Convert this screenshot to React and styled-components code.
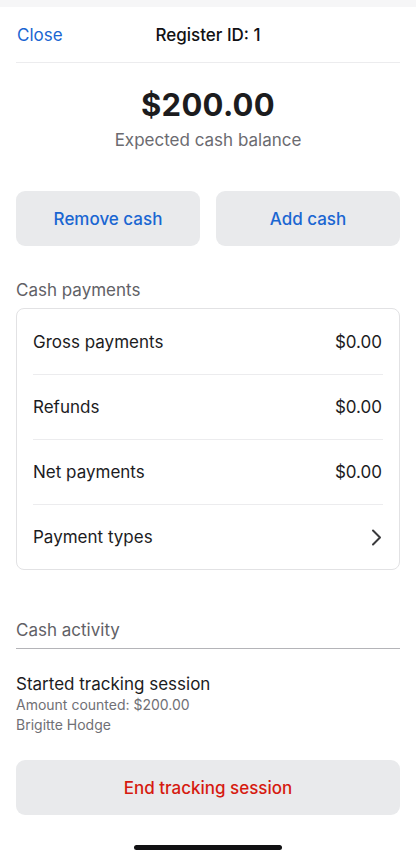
import React from "react";
import styled, { createGlobalStyle } from "styled-components";

const GlobalStyle = createGlobalStyle`
  html, body {
    margin: 0;
    padding: 0;
    background: #ffffff;
  }
  body {
    font-family: Inter, "Noto Sans", "Liberation Sans", sans-serif;
    -webkit-font-smoothing: antialiased;
  }
`;

const rows = [
  { label: "Gross payments", value: "$0.00" },
  { label: "Refunds", value: "$0.00" },
  { label: "Net payments", value: "$0.00" },
  { label: "Payment types", chevron: true },
];

const App = () => {
  return (
    <Screen>
      <GlobalStyle />
      <TopStrip />
      <Page>
        <Header>
          <CloseLink>Close</CloseLink>
          <HeaderTitle>Register ID: 1</HeaderTitle>
        </Header>

        <Balance>
          <Amount>$200.00</Amount>
          <AmountCaption>Expected cash balance</AmountCaption>
        </Balance>

        <ButtonRow>
          <ActionButton>Remove cash</ActionButton>
          <ActionButton>Add cash</ActionButton>
        </ButtonRow>

        <SectionLabel>Cash payments</SectionLabel>
        <Card>
          {rows.map((row, i) => (
            <Row key={row.label} last={i === rows.length - 1}>
              <RowLabel>{row.label}</RowLabel>
              {row.chevron ? (
                <svg width="11" height="17" viewBox="0 0 11 17">
                  <path
                    d="M2 1.5 L9 8.5 L2 15.5"
                    fill="none"
                    stroke="#3a3a3c"
                    strokeWidth="2"
                    strokeLinecap="round"
                    strokeLinejoin="round"
                  />
                </svg>
              ) : (
                <RowValue>{row.value}</RowValue>
              )}
            </Row>
          ))}
        </Card>

        <ActivityHeader>Cash activity</ActivityHeader>
        <Activity>
          <ActivityTitle>Started tracking session</ActivityTitle>
          <ActivityMeta>Amount counted: $200.00</ActivityMeta>
          <ActivityMeta>Brigitte Hodge</ActivityMeta>
        </Activity>

        <EndButton danger>End tracking session</EndButton>
      </Page>
      <HomeBar />
    </Screen>
  );
};

export default App;

const Screen = styled.div`
  width: 416px;
  height: 858px;
  display: flex;
  flex-direction: column;
  background: #ffffff;
  overflow: hidden;
`;

const TopStrip = styled.div`
  height: 7px;
  background: #f6f6f7;
`;

const Page = styled.div`
  flex: 1;
  display: flex;
  flex-direction: column;
  padding: 0 16px;
`;

const Header = styled.div`
  position: relative;
  height: 55px;
  display: flex;
  align-items: center;
  justify-content: center;
  border-bottom: 1px solid #ececee;
`;

const CloseLink = styled.div`
  position: absolute;
  left: 1px;
  top: 50%;
  transform: translateY(-50%);
  font-size: 17px;
  color: #1a66d2;
`;

const HeaderTitle = styled.div`
  font-size: 17px;
  font-weight: 500;
  color: #111113;
`;

const Balance = styled.div`
  display: flex;
  flex-direction: column;
  align-items: center;
  padding-top: 23px;
`;

const Amount = styled.div`
  font-size: 31px;
  font-weight: 700;
  color: #1c1c1e;
  line-height: 38px;
  letter-spacing: 0.3px;
`;

const AmountCaption = styled.div`
  margin-top: 5px;
  font-size: 17px;
  color: #6b6b70;
  line-height: 22px;
`;

const ButtonRow = styled.div`
  display: grid;
  grid-template-columns: 1fr 1fr;
  gap: 16px;
  margin-top: 40px;
`;

const ActionButton = styled.div`
  height: 55px;
  border-radius: 9px;
  background: #e9eaec;
  display: flex;
  align-items: center;
  justify-content: center;
  font-size: 17px;
  font-weight: 500;
  color: ${(props) => (props.danger ? "#d61a10" : "#1a66d2")};
`;

const EndButton = styled(ActionButton)`
  margin-top: 25px;
`;

const SectionLabel = styled.div`
  margin-top: 33px;
  font-size: 17px;
  color: #616166;
  line-height: 22px;
`;

const Card = styled.div`
  margin-top: 7px;
  border: 1px solid #e2e2e4;
  border-radius: 8px;
  padding: 1px 16px 0;
`;

const Row = styled.div`
  height: 64px;
  display: flex;
  align-items: center;
  justify-content: space-between;
  border-bottom: ${(props) => (props.last ? "none" : "1px solid #ececee")};
  padding-right: 1px;
`;

const RowLabel = styled.div`
  font-size: 17px;
  color: #1c1c1e;
`;

const RowValue = styled.div`
  font-size: 17px;
  color: #1c1c1e;
`;

const ActivityHeader = styled.div`
  margin-top: 49px;
  padding-bottom: 7px;
  font-size: 17px;
  color: #616166;
  line-height: 22px;
  border-bottom: 1px solid #b4b4b8;
`;

const Activity = styled.div`
  display: flex;
  flex-direction: column;
  padding-top: 24px;
`;

const ActivityTitle = styled.div`
  font-size: 17px;
  color: #1c1c1e;
  line-height: 22px;
`;

const ActivityMeta = styled.div`
  font-size: 14px;
  color: #707075;
  line-height: 20px;
`;

const HomeBar = styled.div`
  width: 148px;
  height: 5px;
  border-radius: 3px;
  background: #111113;
  margin: 0 auto 8px;
`;
